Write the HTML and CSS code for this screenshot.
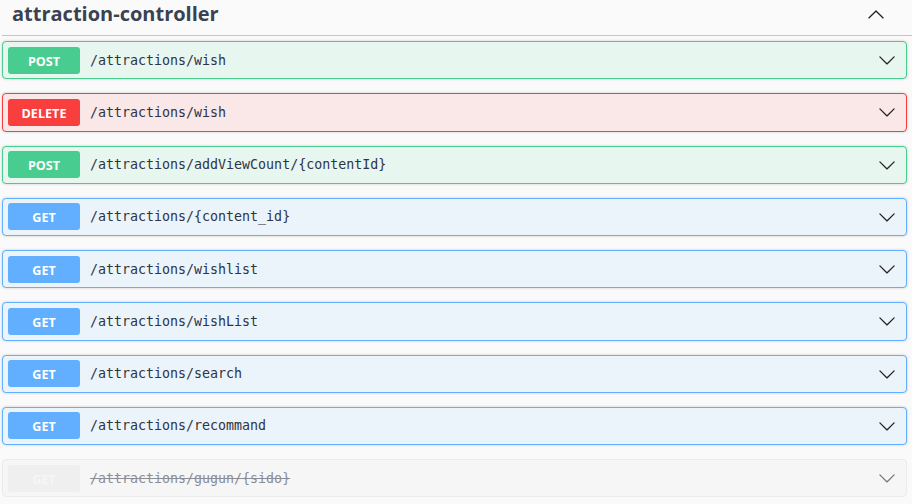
FILE: index.html
```html
<!DOCTYPE html>
<html>
<head>
<meta charset="utf-8">
<link rel="stylesheet" href="styles.css">
</head>
<body>
<div class="section">
  <div class="tag">
    <h3 class="tag-title">attraction-controller</h3>
    <svg class="arrow" viewBox="0 0 20 20" width="18" height="18"><path d="M17.418 14.908c.272.268.709.268.979 0s.271-.701 0-.969l-7.908-7.83c-.27-.268-.707-.268-.979 0l-7.908 7.83c-.27.268-.27.701 0 .969.271.268.709.268.979 0L10 7.767l7.418 7.141z"/></svg>
  </div>
  <div class="ops">
    <div class="op post"><span class="method">POST</span><span class="path">/attractions/wish</span><svg class="arrow" viewBox="0 0 20 20" width="18" height="18"><path d="M17.418 6.109c.272-.268.709-.268.979 0s.271.701 0 .969l-7.908 7.83c-.27.268-.707.268-.979 0l-7.908-7.830c-.27-.268-.27-.701 0-.969.271-.268.709-.268.979 0L10 13.25l7.418-7.141z"/></svg></div>
    <div class="op delete"><span class="method">DELETE</span><span class="path">/attractions/wish</span><svg class="arrow" viewBox="0 0 20 20" width="18" height="18"><path d="M17.418 6.109c.272-.268.709-.268.979 0s.271.701 0 .969l-7.908 7.83c-.27.268-.707.268-.979 0l-7.908-7.83c-.27-.268-.27-.701 0-.969.271-.268.709-.268.979 0L10 13.25l7.418-7.141z"/></svg></div>
    <div class="op post"><span class="method">POST</span><span class="path">/attractions/addViewCount/{contentId}</span><svg class="arrow" viewBox="0 0 20 20" width="18" height="18"><path d="M17.418 6.109c.272-.268.709-.268.979 0s.271.701 0 .969l-7.908 7.83c-.27.268-.707.268-.979 0l-7.908-7.83c-.27-.268-.27-.701 0-.969.271-.268.709-.268.979 0L10 13.25l7.418-7.141z"/></svg></div>
    <div class="op get"><span class="method">GET</span><span class="path">/attractions/{content_id}</span><svg class="arrow" viewBox="0 0 20 20" width="18" height="18"><path d="M17.418 6.109c.272-.268.709-.268.979 0s.271.701 0 .969l-7.908 7.83c-.27.268-.707.268-.979 0l-7.908-7.83c-.27-.268-.27-.701 0-.969.271-.268.709-.268.979 0L10 13.25l7.418-7.141z"/></svg></div>
    <div class="op get"><span class="method">GET</span><span class="path">/attractions/wishlist</span><svg class="arrow" viewBox="0 0 20 20" width="18" height="18"><path d="M17.418 6.109c.272-.268.709-.268.979 0s.271.701 0 .969l-7.908 7.83c-.27.268-.707.268-.979 0l-7.908-7.83c-.27-.268-.27-.701 0-.969.271-.268.709-.268.979 0L10 13.25l7.418-7.141z"/></svg></div>
    <div class="op get"><span class="method">GET</span><span class="path">/attractions/wishList</span><svg class="arrow" viewBox="0 0 20 20" width="18" height="18"><path d="M17.418 6.109c.272-.268.709-.268.979 0s.271.701 0 .969l-7.908 7.83c-.27.268-.707.268-.979 0l-7.908-7.83c-.27-.268-.27-.701 0-.969.271-.268.709-.268.979 0L10 13.25l7.418-7.141z"/></svg></div>
    <div class="op get"><span class="method">GET</span><span class="path">/attractions/search</span><svg class="arrow" viewBox="0 0 20 20" width="18" height="18"><path d="M17.418 6.109c.272-.268.709-.268.979 0s.271.701 0 .969l-7.908 7.83c-.27.268-.707.268-.979 0l-7.908-7.83c-.27-.268-.27-.701 0-.969.271-.268.709-.268.979 0L10 13.25l7.418-7.141z"/></svg></div>
    <div class="op get"><span class="method">GET</span><span class="path">/attractions/recommand</span><svg class="arrow" viewBox="0 0 20 20" width="18" height="18"><path d="M17.418 6.109c.272-.268.709-.268.979 0s.271.701 0 .969l-7.908 7.83c-.27.268-.707.268-.979 0l-7.908-7.83c-.27-.268-.27-.701 0-.969.271-.268.709-.268.979 0L10 13.25l7.418-7.141z"/></svg></div>
    <div class="op deprecated"><span class="method">GET</span><span class="path">/attractions/gugun/{sido}</span><svg class="arrow" viewBox="0 0 20 20" width="18" height="18"><path d="M17.418 6.109c.272-.268.709-.268.979 0s.271.701 0 .969l-7.908 7.83c-.27.268-.707.268-.979 0l-7.908-7.83c-.27-.268-.27-.701 0-.969.271-.268.709-.268.979 0L10 13.25l7.418-7.141z"/></svg></div>
  </div>
</div>
</body>
</html>
```
FILE: styles.css
```css
html, body {
  margin: 0;
  padding: 0;
  background: #fafafa;
}
body {
  font-family: "Open Sans", "Noto Sans", sans-serif;
  color: #3b4151;
}
.section {
  padding: 0 0 0 2px;
}
.tag {
  display: flex;
  align-items: center;
  justify-content: space-between;
  height: 35px;
  border-bottom: 1px solid #c4c4c6;
  padding: 0 27px 0 10px;
  margin-bottom: 5px;
}
.tag-title {
  margin: 0;
  font-size: 20px;
  font-weight: 700;
  color: #3b4151;
  position: relative;
  top: -4px;
}
.tag .arrow {
  fill: #222;
  position: relative;
  top: -4px;
}
.ops {
  width: 905px;
}
.op {
  display: flex;
  align-items: center;
  box-sizing: border-box;
  height: 38.25px;
  margin-bottom: 14px;
  border: 1px solid;
  border-radius: 4px;
  padding: 0 10px 0 5px;
  box-shadow: 0 0 3px rgba(0,0,0,.19);
}
.method {
  width: 72px;
  height: 27px;
  line-height: 29px;
  border-radius: 3px;
  color: #fff;
  font-size: 12.6px;
  font-weight: 700;
  text-align: center;
  flex: none;
}
.path {
  flex: 1;
  padding-left: 10px;
  font-family: "DejaVu Sans Mono", "Liberation Mono", monospace;
  font-size: 13.3px;
  color: #2f3442;
}
.op .arrow {
  flex: none;
  fill: #222;
}
.post { background: #e8f6f0; border-color: #49cc90; }
.post .method { background: #49cc90; }
.delete { background: #fae7e7; border-color: #f93e3e; }
.delete .method { background: #f93e3e; }
.get { background: #ebf3fb; border-color: #61affe; }
.get .method { background: #61affe; }
.deprecated { background: #f6f6f6; border-color: #ebebeb; box-shadow: none; }
.deprecated .method { background: #efefef; color: #f6f6f6; }
.deprecated .path { text-decoration: line-through; color: #8a8d96; }
.deprecated .arrow { fill: #777; }
```
